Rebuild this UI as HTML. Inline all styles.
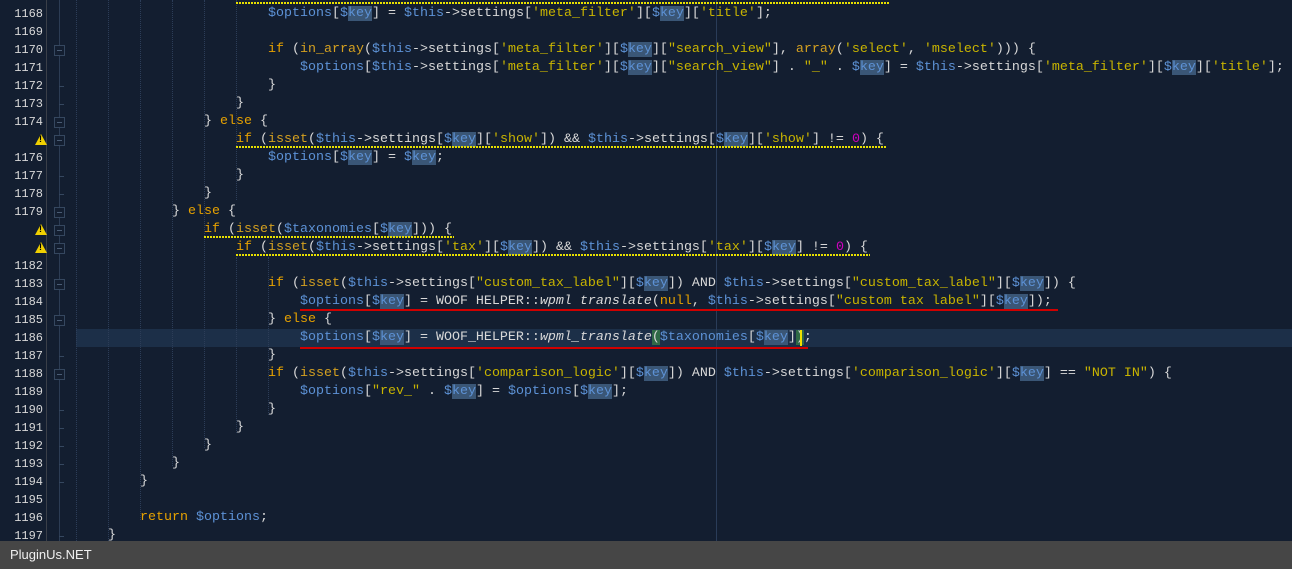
<!DOCTYPE html>
<html><head><meta charset="utf-8"><style>
body{margin:0;width:1292px;height:569px;overflow:hidden;background:#131e30;position:relative;font-family:"Liberation Mono",monospace;}
.ln{position:absolute;left:0;width:43px;text-align:right;color:#d8d8d8;font-size:12px;height:18px;line-height:18px;}
.c{position:absolute;left:76px;white-space:pre;font-size:13.33px;line-height:18px;height:18px;color:#d8d8d8;}
.v{color:#5d92d6}.k{color:#e6a100}.s{color:#c8b400}.f{color:#d4a020}.n{color:#d000c0}
.h{background:#3a5676}
.g{position:absolute;top:0;height:541px;border-left:1px dotted #2c3d58;}
.fb{position:absolute;left:54px;width:9px;height:9px;border:1px solid #35475f;background:#131e30;}
.fb:after{content:"";position:absolute;left:2px;top:4px;width:5px;height:1px;background:#4a5c74;}
.tk{position:absolute;left:59px;width:5px;height:1px;background:#35475f;}
.w{position:absolute;left:35px;width:0;height:0;border-left:6px solid transparent;border-right:6px solid transparent;border-bottom:11px solid #f0d000;}
.w:after{content:"!";position:absolute;left:-2px;top:0px;font:bold 9px "Liberation Sans",sans-serif;color:#000;}
.wv{position:absolute;height:2px;background:repeating-linear-gradient(90deg,#e8e000 0 2px,transparent 2px 3px);}
.ru{position:absolute;height:2px;background:#d00000;}
</style></head><body>
<div style="position:absolute;left:46px;top:0;width:1px;height:541px;background:#3a3f48"></div>
<div style="position:absolute;left:59px;top:0;width:1px;height:541px;background:#2c3c54"></div>
<div style="position:absolute;left:76px;top:329px;width:1216px;height:18px;background:#1c2f48"></div>
<div class="g" style="left:76px"></div><div class="g" style="left:108px"></div><div class="g" style="left:140px;height:520px"></div><div class="g" style="left:172px;height:466px"></div><div class="g" style="left:204px;height:448px"></div><div class="g" style="left:236px;top:0;height:200px"></div><div class="g" style="left:236px;top:257px;height:176px"></div><div class="g" style="left:268px;top:257px;height:158px"></div>
<div style="position:absolute;left:716px;top:0;width:1px;height:541px;background:#2a3c58"></div>

<div class="fb" style="top:45px"></div><div class="fb" style="top:117px"></div><div class="fb" style="top:135px"></div><div class="fb" style="top:207px"></div><div class="fb" style="top:225px"></div><div class="fb" style="top:243px"></div><div class="fb" style="top:279px"></div><div class="fb" style="top:315px"></div><div class="fb" style="top:369px"></div>
<div class="tk" style="top:86px"></div><div class="tk" style="top:104px"></div><div class="tk" style="top:176px"></div><div class="tk" style="top:194px"></div><div class="tk" style="top:356px"></div><div class="tk" style="top:410px"></div><div class="tk" style="top:428px"></div><div class="tk" style="top:446px"></div><div class="tk" style="top:464px"></div><div class="tk" style="top:482px"></div><div class="tk" style="top:536px"></div>
<div class="w" style="top:134px"></div><div class="w" style="top:224px"></div><div class="w" style="top:242px"></div>

<div class="ln" style="top:5px">1168</div><div class="ln" style="top:23px">1169</div><div class="ln" style="top:41px">1170</div><div class="ln" style="top:59px">1171</div><div class="ln" style="top:77px">1172</div><div class="ln" style="top:95px">1173</div><div class="ln" style="top:113px">1174</div><div class="ln" style="top:149px">1176</div><div class="ln" style="top:167px">1177</div><div class="ln" style="top:185px">1178</div><div class="ln" style="top:203px">1179</div><div class="ln" style="top:257px">1182</div><div class="ln" style="top:275px">1183</div><div class="ln" style="top:293px">1184</div><div class="ln" style="top:311px">1185</div><div class="ln" style="top:329px">1186</div><div class="ln" style="top:347px">1187</div><div class="ln" style="top:365px">1188</div><div class="ln" style="top:383px">1189</div><div class="ln" style="top:401px">1190</div><div class="ln" style="top:419px">1191</div><div class="ln" style="top:437px">1192</div><div class="ln" style="top:455px">1193</div><div class="ln" style="top:473px">1194</div><div class="ln" style="top:491px">1195</div><div class="ln" style="top:509px">1196</div><div class="ln" style="top:527px">1197</div>

<div class="wv" style="left:236px;top:2px;width:654px"></div>
<div class="c" style="top:5px">                        <span class="v">$options</span>[<span class="v">$<span class="h">key</span></span>] = <span class="v">$this</span>-&gt;settings[<span class="s">'meta_filter'</span>][<span class="v">$<span class="h">key</span></span>][<span class="s">'title'</span>];</div>
<div class="c" style="top:41px">                        <span class="k">if</span> (<span class="f">in_array</span>(<span class="v">$this</span>-&gt;settings[<span class="s">'meta_filter'</span>][<span class="v">$<span class="h">key</span></span>][<span class="s">"search_view"</span>], <span class="f">array</span>(<span class="s">'select'</span>, <span class="s">'mselect'</span>))) {</div>
<div class="c" style="top:59px">                            <span class="v">$options</span>[<span class="v">$this</span>-&gt;settings[<span class="s">'meta_filter'</span>][<span class="v">$<span class="h">key</span></span>][<span class="s">"search_view"</span>] . <span class="s">"_"</span> . <span class="v">$<span class="h">key</span></span>] = <span class="v">$this</span>-&gt;settings[<span class="s">'meta_filter'</span>][<span class="v">$<span class="h">key</span></span>][<span class="s">'title'</span>];</div>
<div class="c" style="top:77px">                        }</div>
<div class="c" style="top:95px">                    }</div>
<div class="c" style="top:113px">                } <span class="k">else</span> {</div>
<div class="c" style="top:131px">                    <span class="k">if</span> (<span class="f">isset</span>(<span class="v">$this</span>-&gt;settings[<span class="v">$<span class="h">key</span></span>][<span class="s">'show'</span>]) &amp;&amp; <span class="v">$this</span>-&gt;settings[<span class="v">$<span class="h">key</span></span>][<span class="s">'show'</span>] != <span class="n">0</span>) {</div>
<div class="wv" style="left:236px;top:146px;width:650px"></div>
<div class="c" style="top:149px">                        <span class="v">$options</span>[<span class="v">$<span class="h">key</span></span>] = <span class="v">$<span class="h">key</span></span>;</div>
<div class="c" style="top:167px">                    }</div>
<div class="c" style="top:185px">                }</div>
<div class="c" style="top:203px">            } <span class="k">else</span> {</div>
<div class="c" style="top:221px">                <span class="k">if</span> (<span class="f">isset</span>(<span class="v">$taxonomies</span>[<span class="v">$<span class="h">key</span></span>])) {</div>
<div class="wv" style="left:204px;top:236px;width:250px"></div>
<div class="c" style="top:239px">                    <span class="k">if</span> (<span class="f">isset</span>(<span class="v">$this</span>-&gt;settings[<span class="s">'tax'</span>][<span class="v">$<span class="h">key</span></span>]) &amp;&amp; <span class="v">$this</span>-&gt;settings[<span class="s">'tax'</span>][<span class="v">$<span class="h">key</span></span>] != <span class="n">0</span>) {</div>
<div class="wv" style="left:236px;top:254px;width:634px"></div>
<div class="c" style="top:275px">                        <span class="k">if</span> (<span class="f">isset</span>(<span class="v">$this</span>-&gt;settings[<span class="s">"custom_tax_label"</span>][<span class="v">$<span class="h">key</span></span>]) AND <span class="v">$this</span>-&gt;settings[<span class="s">"custom_tax_label"</span>][<span class="v">$<span class="h">key</span></span>]) {</div>
<div class="c" style="top:293px">                            <span class="v">$options</span>[<span class="v">$<span class="h">key</span></span>] = WOOF HELPER::<i>wpml translate</i>(<span class="k">null</span>, <span class="v">$this</span>-&gt;settings[<span class="s">"custom tax label"</span>][<span class="v">$<span class="h">key</span></span>]);</div>
<div class="ru" style="left:300px;top:309px;width:758px"></div>
<div class="c" style="top:311px">                        } <span class="k">else</span> {</div>
<div class="c" style="top:329px">                            <span class="v">$options</span>[<span class="v">$<span class="h">key</span></span>] = WOOF_HELPER::<i>wpml_translate</i><span style="background:#2f6a46">(</span><span class="v">$taxonomies</span>[<span class="v">$<span class="h">key</span></span>]<span style="background:#2f6a46">)</span>;</div>
<div style="position:absolute;left:800px;top:330px;width:2px;height:16px;background:#f0e000"></div>
<div class="ru" style="left:300px;top:347px;width:508px"></div>
<div class="c" style="top:347px">                        }</div>
<div class="c" style="top:365px">                        <span class="k">if</span> (<span class="f">isset</span>(<span class="v">$this</span>-&gt;settings[<span class="s">'comparison_logic'</span>][<span class="v">$<span class="h">key</span></span>]) AND <span class="v">$this</span>-&gt;settings[<span class="s">'comparison_logic'</span>][<span class="v">$<span class="h">key</span></span>] == <span class="s">"NOT IN"</span>) {</div>
<div class="c" style="top:383px">                            <span class="v">$options</span>[<span class="s">"rev_"</span> . <span class="v">$<span class="h">key</span></span>] = <span class="v">$options</span>[<span class="v">$<span class="h">key</span></span>];</div>
<div class="c" style="top:401px">                        }</div>
<div class="c" style="top:419px">                    }</div>
<div class="c" style="top:437px">                }</div>
<div class="c" style="top:455px">            }</div>
<div class="c" style="top:473px">        }</div>
<div class="c" style="top:509px">        <span class="k">return</span> <span class="v">$options</span>;</div>
<div class="c" style="top:527px">    }</div>

<div style="position:absolute;left:0;top:541px;width:1292px;height:28px;background:#464646;color:#f0f0f0;font:13px 'Liberation Sans',sans-serif;line-height:28px;padding-left:10px;box-sizing:border-box">PluginUs.NET</div>
</body></html>
